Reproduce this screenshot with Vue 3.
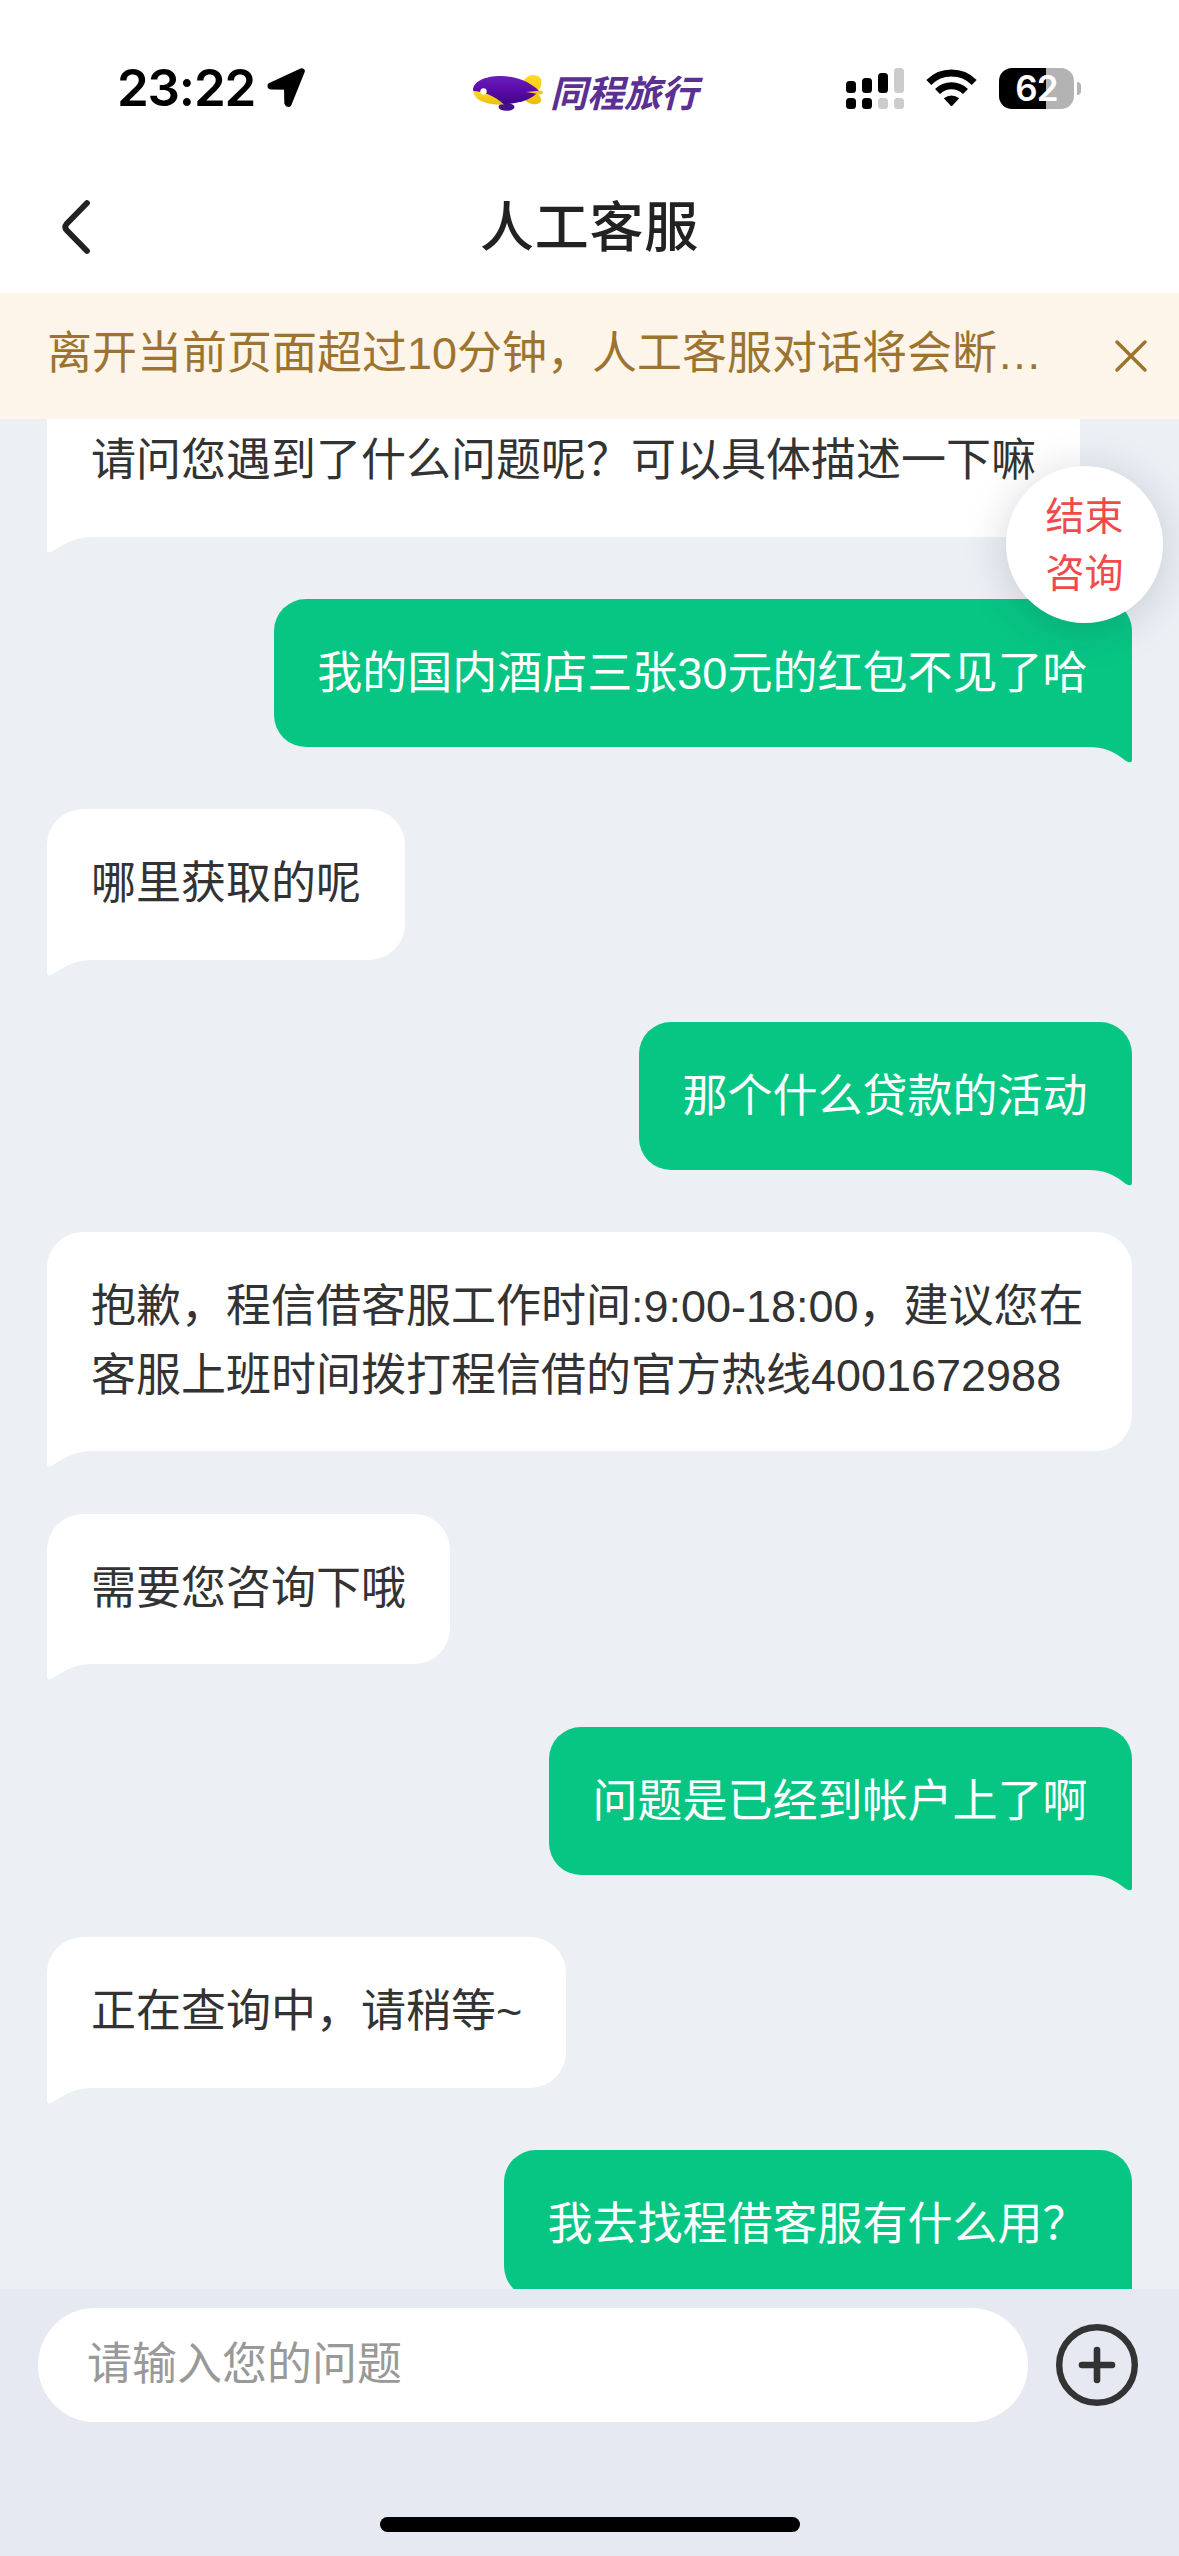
<script setup>
const messages = [
  { from: 'agent', text: '请问您遇到了什么问题呢？可以具体描述一下嘛', cut: true },
  { from: 'user', text: '我的国内酒店三张30元的红包不见了哈' },
  { from: 'agent', text: '哪里获取的呢' },
  { from: 'user', text: '那个什么贷款的活动' },
  { from: 'agent', text: '抱歉，程信借客服工作时间:9:00-18:00，建议您在客服上班时间拨打程信借的官方热线4001672988' },
  { from: 'agent', text: '需要您咨询下哦' },
  { from: 'user', text: '问题是已经到帐户上了啊' },
  { from: 'agent', text: '正在查询中，请稍等~' },
  { from: 'user', text: '我去找程借客服有什么用？' },
]
const signal = [
  { h: 12, top: true, bottom: true },
  { h: 15, top: true, bottom: true },
  { h: 20, top: true, bottom: false },
  { h: 25, top: false, bottom: false },
]
</script>

<template>
  <div class="screen">
    <header class="status">
      <div class="status-left">
        <span class="time">23:22</span>
        <svg class="arrow" width="39" height="40" viewBox="0 0 39 40">
          <path d="M34.8 3.2 L3.5 17.8 Q3.5 18.6 4.5 18.6 L20 18.8 L20.3 35 Q20.6 36 21.6 36 Z" stroke="#000" stroke-width="6" stroke-linejoin="round" fill="#000" />
        </svg>
      </div>
      <div class="brand">
        <svg class="whale" width="72" height="38" viewBox="0 0 72 38">
          <defs>
            <linearGradient id="body" x1="0" y1="0" x2="0" y2="1">
              <stop offset="0" stop-color="#6a1fb8" />
              <stop offset="0.5" stop-color="#5a0aa8" />
              <stop offset="1" stop-color="#3d0684" />
            </linearGradient>
            <linearGradient id="fin" x1="0" y1="0" x2="0" y2="1">
              <stop offset="0" stop-color="#ffdc20" />
              <stop offset="1" stop-color="#eebb10" />
            </linearGradient>
          </defs>
          <path d="M52 6 C57 -1 66 0 69 5 C70 9 69 14 66 16 L66 20 C68 21 68 23 69 25 C70 29 65 31 60 30 C57 29 54 28 52 25 Z" fill="url(#fin)" />
          <ellipse cx="34.500" cy="33" rx="8" ry="3.800" fill="#43108c" />
          <path d="M1 16 C1 8 12 2 29 2 C46 2 60 9 67 17 C60 25 50 29 32 30.500 C18 30 6 27 1 16 Z" fill="url(#body)" />
          <path d="M1 17 C10 17 23 22 32 30.500 C17 31 3 28 1 17 Z" fill="url(#fin)" />
          <path d="M54 18 L69 16.500 Q73 18.500 69 20.500 Z" fill="#f3c419" />
          <circle cx="11.500" cy="17.500" r="3.200" fill="#fff" />
        </svg>
        <span class="brand-name">同程旅行</span>
      </div>
      <div class="status-right">
        <div class="signal">
          <div v-for="(s, i) in signal" :key="i" class="signal-col">
            <i class="bar" :class="{ on: s.top }" :style="{ height: s.h + 'px' }"></i>
            <i class="bar dot" :class="{ on: s.bottom }"></i>
          </div>
        </div>
        <svg class="wifi" width="51" height="38" viewBox="0 0 51 38">
          <g fill="none" stroke="#000" stroke-width="7">
            <path d="M2.800 13.500 A32 32 0 0 1 48.200 13.500" />
            <path d="M11.500 22.500 A20 20 0 0 1 39.500 22.500" />
          </g>
          <path d="M17.800 29.300 Q25.500 23.500 33.200 29.300 L26.500 36.500 Q25.500 37.500 24.500 36.500 Z" />
        </svg>
        <div class="battery"><span>62</span></div>
        <i class="nub"></i>
      </div>
    </header>

    <nav class="title-bar">
      <svg class="back" width="32" height="58" viewBox="0 0 32 58">
        <path d="M27 5 L6.500 26 Q4 29 6.500 32 L27 53" fill="none" stroke="#222" stroke-width="5.800" stroke-linecap="round" />
      </svg>
      <h1>人工客服</h1>
      <span class="back"></span>
    </nav>

    <div class="notice">
      <p>离开当前页面超过10分钟，人工客服对话将会断…</p>
      <svg width="34" height="34" viewBox="0 0 34 34">
        <path d="M3 3 L31 31 M31 3 L3 31" stroke="#9c7430" stroke-width="3.500" stroke-linecap="round" />
      </svg>
    </div>

    <main class="chat">
      <div v-for="(m, i) in messages" :key="i" class="bubble" :class="[m.from, { cut: m.cut }]">
        {{ m.text }}
        <svg v-if="m.from === 'agent'" class="tail" width="47" height="17" viewBox="0 0 47 17">
          <path d="M0 0 H47 V1 C29 1 20 6 6 15 Q0 18 0 14 Z" fill="#fff" />
        </svg>
        <svg v-else class="tail" width="45" height="17" viewBox="0 0 45 17">
          <path d="M45 0 H0 V1 C18 1 26 5 39 15 Q45 18 45 14 Z" fill="#06c681" />
        </svg>
      </div>
      <button class="end"><span>结束</span><span>咨询</span></button>
    </main>

    <footer class="composer">
      <div class="row">
        <div class="field">请输入您的问题</div>
        <svg class="plus" width="82" height="82" viewBox="0 0 82 82" fill="none" stroke="#333" stroke-linecap="round">
          <circle cx="41" cy="41" r="37.800" stroke-width="6.400" />
          <path d="M26 41 H56 M41 26 V56" stroke-width="6.600" />
        </svg>
      </div>
      <div class="home"></div>
    </footer>
  </div>
</template>

<style>
body { margin: 0; }
</style>

<style scoped>
.screen {
  width: 1179px;
  height: 2556px;
  display: flex;
  flex-direction: column;
  overflow: hidden;
  background: #fff;
  font-family: "Liberation Sans", "Noto Sans CJK SC", sans-serif;
}
.status {
  height: 176px;
  flex: none;
  display: flex;
  align-items: center;
}
.status-left {
  width: 355px;
  margin-left: 117px;
  display: flex;
  align-items: center;
}
.time {
  width: 150px;
  font: 600 51px/60px Inter, sans-serif;
  letter-spacing: -1.2px;
  color: #000;
}
.brand {
  width: 374px;
  display: flex;
  align-items: center;
  gap: 6px;
  margin-top: 9px;
}
.brand-name {
  margin-top: -3px;
  font: italic 700 37px/44px "Noto Sans CJK SC", sans-serif;
  color: #5c2f92;
}
.status-right {
  display: flex;
  align-items: center;
}
.signal {
  display: flex;
  gap: 6px;
  align-items: flex-end;
}
.signal-col {
  display: flex;
  flex-direction: column;
  gap: 5px;
}
.bar {
  width: 10px;
  border-radius: 3.5px;
  background: #ccc;
}
.dot { height: 11px; }
.bar.on { background: #000; }
.wifi { margin-left: 22px; }
.battery {
  width: 75px;
  height: 41px;
  margin-left: 22px;
  border-radius: 13px;
  background: linear-gradient(90deg, #000 47px, #b3b3b3 47px);
  text-align: center;
  color: #fff;
  font: 600 35px/41px Inter, sans-serif;
  letter-spacing: -0.8px;
}
.nub {
  width: 4px;
  height: 13px;
  margin-left: 3px;
  border-radius: 0 4px 4px 0;
  background: #b3b3b3;
}
.title-bar {
  height: 117px;
  flex: none;
  padding: 0 60px;
  box-sizing: border-box;
  display: flex;
  justify-content: space-between;
  align-items: center;
}
.back {
  width: 32px;
  margin-top: -15px;
}
h1 {
  margin: -21px 0 0;
  font: 500 54px/70px "Noto Sans CJK SC", sans-serif;
  letter-spacing: 0.8px;
  color: #222;
}
.notice {
  height: 126px;
  flex: none;
  box-sizing: border-box;
  padding: 0 31px 0 47px;
  background: #fdf4ea;
  display: flex;
  align-items: center;
  justify-content: space-between;
  color: #9c7430;
}
.notice p {
  margin: -4px 0 0;
  font-size: 45px;
  line-height: 68px;
  white-space: nowrap;
}
.chat {
  position: relative;
  height: 1870px;
  flex: none;
  box-sizing: border-box;
  padding: 0 47px;
  overflow: hidden;
  display: flex;
  flex-direction: column;
  align-items: flex-start;
  gap: 62.6px;
  background: #ecf0f5;
}
.bubble {
  position: relative;
  flex: none;
  box-sizing: border-box;
  max-width: 1085px;
  padding: 41px 43.9px 41px;
  font-size: 45px;
  line-height: 68.5px;
  color: #333;
  background: #fff;
  border-radius: 36px 36px 36px 0;
}
.user {
  align-self: flex-end;
  padding: 41px 44.6px 38px 43.2px;
  color: #fff;
  background: #07c684;
  border-radius: 32px 32px 0 32px;
}
.cut {
  margin-top: -33px;
  border-radius: 0 0 36px 0;
}
.tail {
  position: absolute;
  left: 0;
  top: calc(100% - 1px);
}
.user .tail {
  left: auto;
  right: 0;
}
.end {
  position: absolute;
  left: 1006px;
  top: 47px;
  width: 157px;
  height: 157px;
  padding: 0 0 6px;
  border: 0;
  border-radius: 50%;
  background: #fff;
  box-shadow: 0 6px 44px rgba(30, 30, 60, 0.18);
  display: flex;
  flex-direction: column;
  align-items: center;
  justify-content: center;
  font: 39px/57px "Noto Sans CJK SC", sans-serif;
  color: #f04a4a;
}
.composer {
  flex: 1;
  display: flex;
  flex-direction: column;
  justify-content: space-between;
  align-items: center;
  padding: 19px 0 24px;
  background: #e6e9f1;
}
.row {
  width: 1100px;
  margin-left: -3px;
  display: flex;
  align-items: center;
  justify-content: space-between;
}
.field {
  width: 990px;
  height: 114px;
  box-sizing: border-box;
  padding: 0 49px;
  border-radius: 57px;
  background: #fff;
  font-size: 45px;
  line-height: 113px;
  color: #999;
}
.home {
  width: 420px;
  height: 15px;
  border-radius: 8px;
  background: #000;
}
</style>
